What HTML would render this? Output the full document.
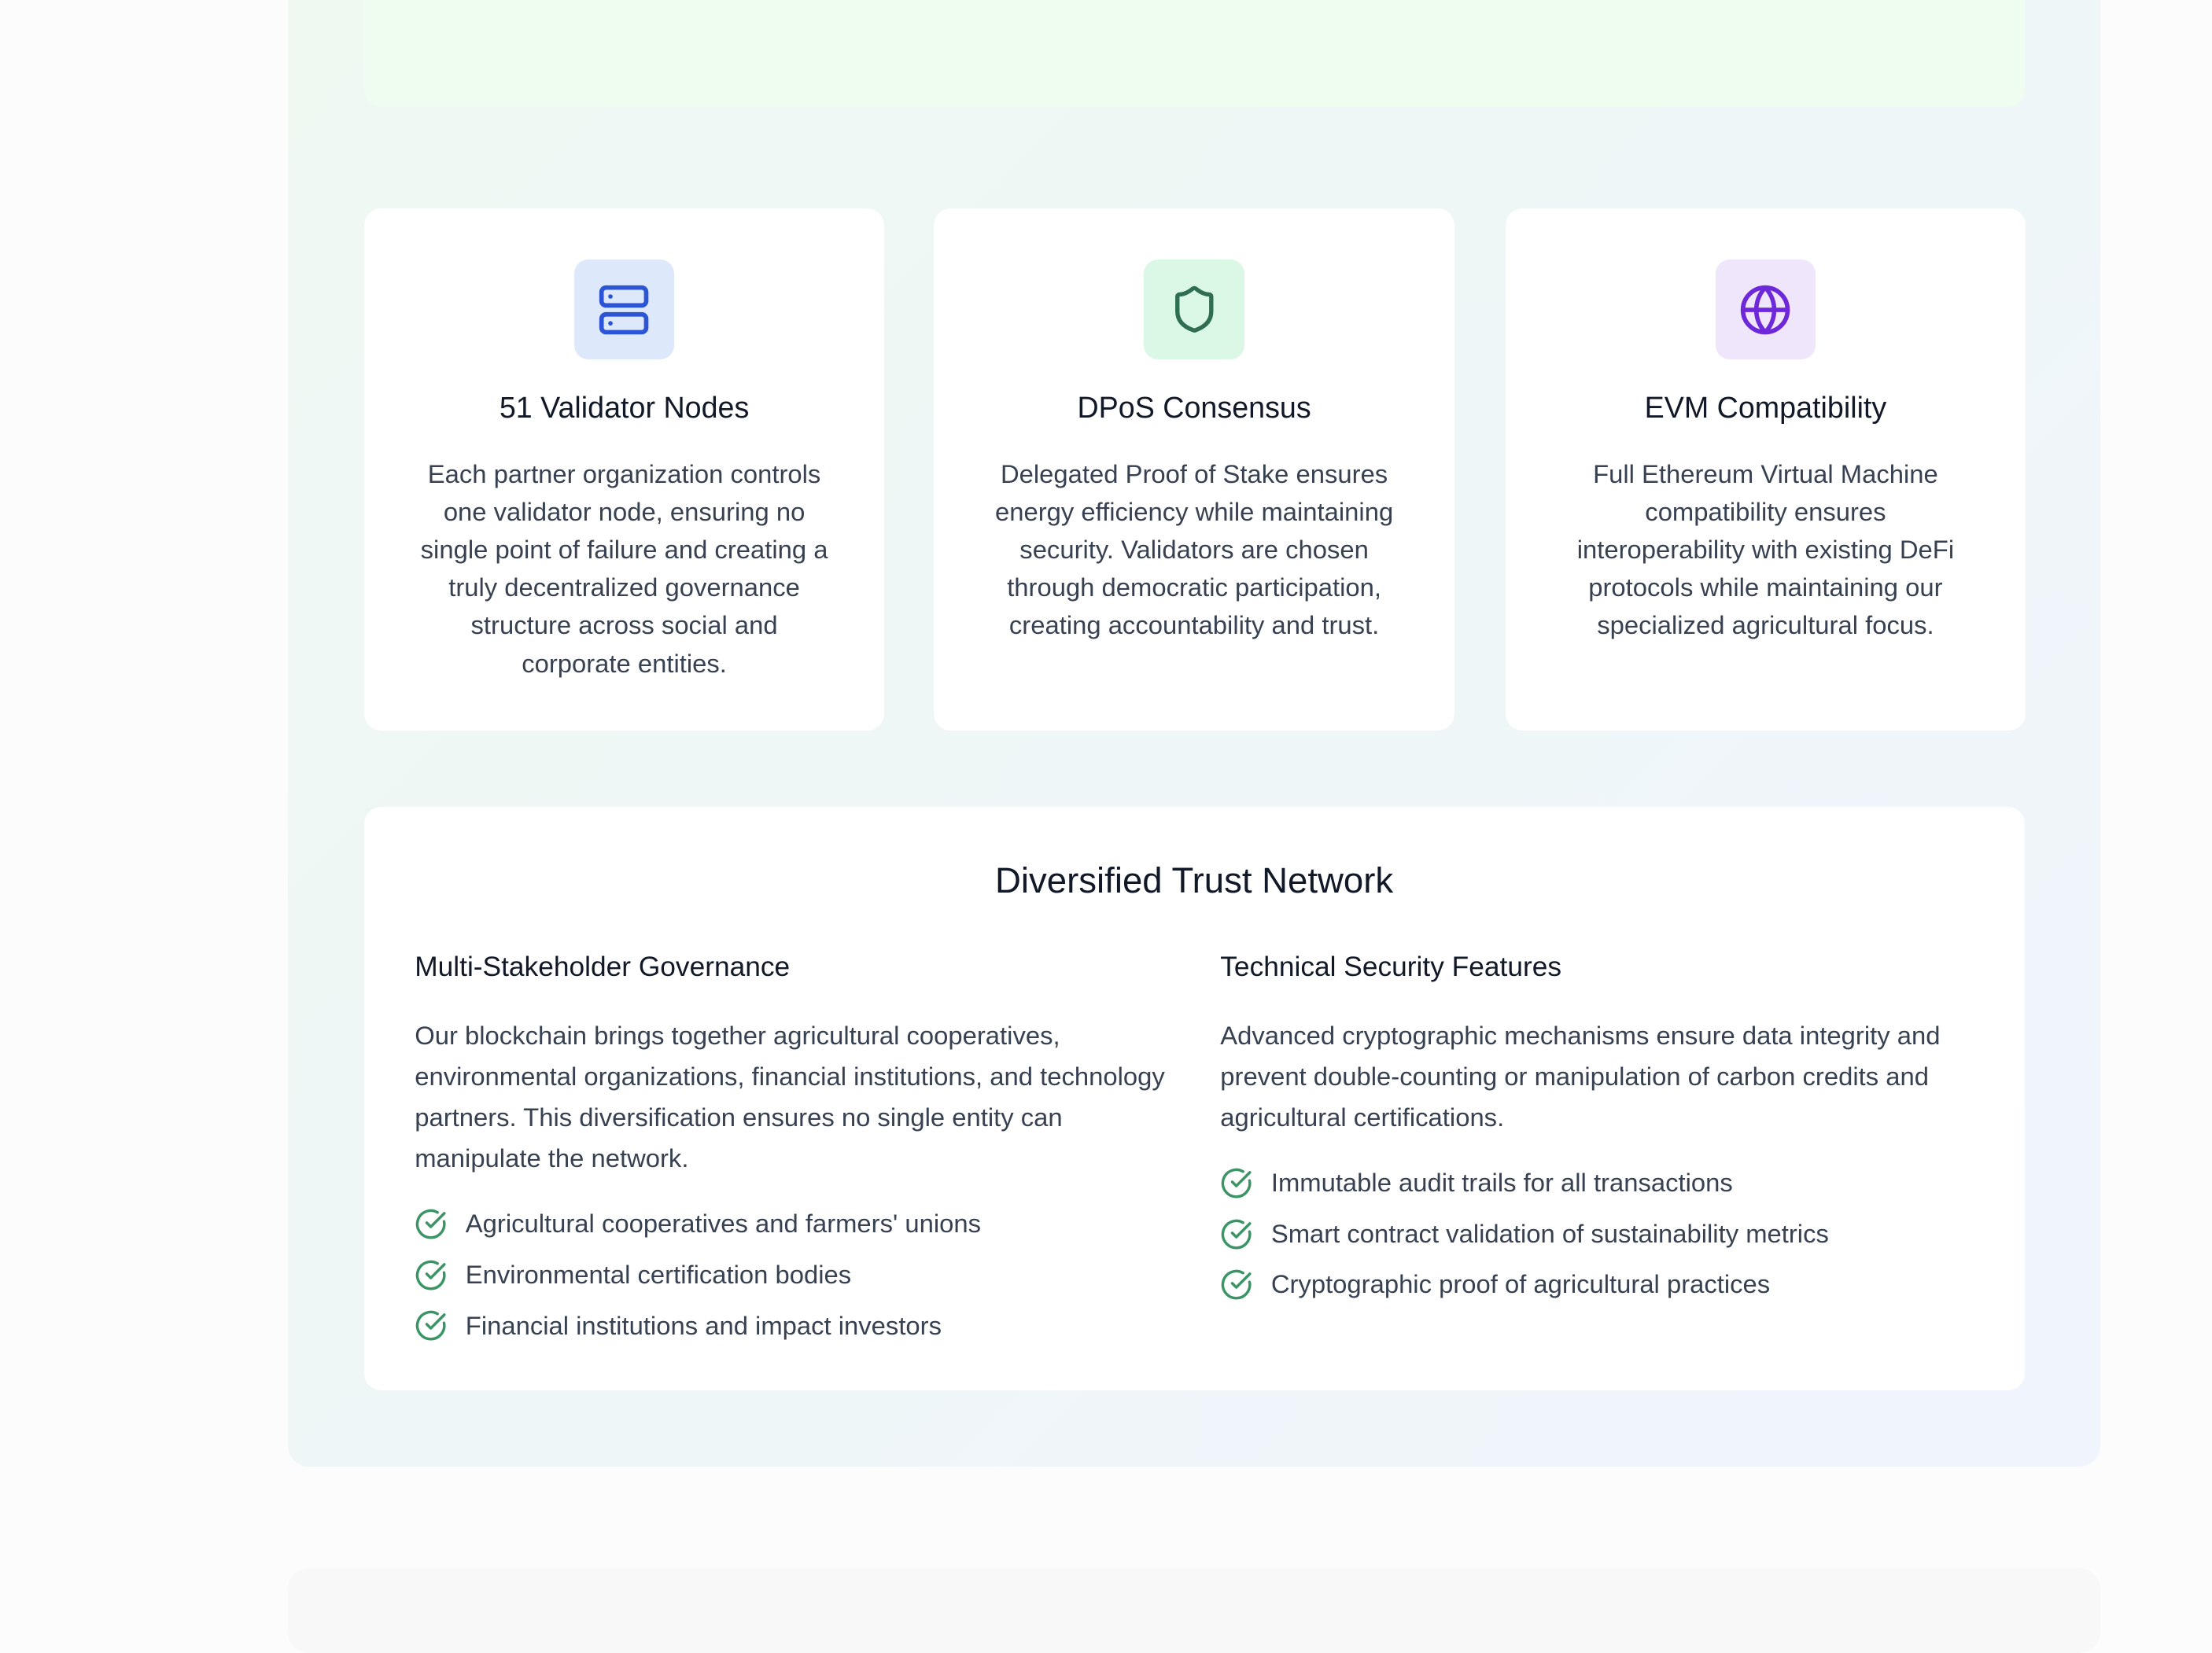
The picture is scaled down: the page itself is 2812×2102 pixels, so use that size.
<!DOCTYPE html>
<html><head><meta charset="utf-8"><style>
html,body{margin:0;padding:0;}
body{width:1568px;height:1132px;zoom:1.7934;background:#fcfcfc;position:relative;overflow:hidden;font-family:"Liberation Sans",sans-serif;color:#374151;}
.panel{position:absolute;left:204px;top:-30px;width:1285px;height:1070px;border-radius:15px;background:linear-gradient(135deg,#eff9f2 0%,#eff6f7 50%,#f0f4fd 100%);}
.top{position:absolute;left:258px;top:-20px;width:1177px;height:96px;border-radius:12px;background:#effcf0;}
.card{position:absolute;top:148px;width:369px;height:370px;background:#fff;border-radius:12px;text-align:center;}
.ib{width:71px;height:71px;border-radius:10px;margin:36px auto 0;display:flex;align-items:center;justify-content:center;}
.card h3{font-size:21px;font-weight:500;color:#111827;margin:20px 0 0;line-height:28px;}
.card p{font-size:18.3px;line-height:26.8px;margin:20px 38px 0;color:#374151;}
.big{position:absolute;left:258px;top:572px;width:1177px;height:414px;background:#fff;border-radius:12px;}
h2{font-size:25.4px;font-weight:500;color:#111827;text-align:center;margin:0;position:absolute;top:38px;left:0;right:0;}
.col{position:absolute;top:100px;width:540px;}
.col h4{font-size:19.7px;font-weight:500;color:#111827;margin:0;line-height:28px;}
.col p{font-size:18.3px;line-height:29px;margin:20px 0 0;}
.col ul{list-style:none;padding:0;margin:14px 0 0;}
.col li{font-size:18.3px;line-height:36px;display:flex;align-items:center;}
.col li svg{margin-right:13px;flex:none;}
.bot{position:absolute;left:204px;top:1112px;width:1285px;height:60px;border-radius:15px;background:#f8f8f8;}
</style></head><body>
<div class="panel"></div>
<div class="top"></div>
<div class="card" style="left:258px"><div class="ib" style="background:#dde8fb"><svg width="38" height="38" viewBox="0 0 24 24" fill="none" stroke="#2b54d6" stroke-width="2" stroke-linecap="round" stroke-linejoin="round"><rect x="2" y="2" width="20" height="8" rx="2"/><rect x="2" y="14" width="20" height="8" rx="2"/><line x1="6" y1="6" x2="6.01" y2="6"/><line x1="6" y1="18" x2="6.01" y2="18"/></svg></div><h3>51 Validator Nodes</h3><p>Each partner organization controls one validator node, ensuring no single point of failure and creating a truly decentralized governance structure across social and corporate entities.</p></div>
<div class="card" style="left:662px"><div class="ib" style="background:#dbf7e5"><svg width="36" height="36" viewBox="0 0 24 24" fill="none" stroke="#2f6f4f" stroke-width="2" stroke-linecap="round" stroke-linejoin="round"><path d="M20 13c0 5-3.5 7.5-7.66 8.95a1 1 0 0 1-.67-.01C7.5 20.5 4 18 4 13V6a1 1 0 0 1 1-1c2 0 4.5-1.2 6.240-2.72a1.17 1.17 0 0 1 1.52 0C14.51 3.81 17 5 19 5a1 1 0 0 1 1 1z"/></svg></div><h3>DPoS Consensus</h3><p>Delegated Proof of Stake ensures energy efficiency while maintaining security. Validators are chosen through democratic participation, creating accountability and trust.</p></div>
<div class="card" style="left:1067px"><div class="ib" style="background:#efe6fc"><svg width="38" height="38" viewBox="0 0 24 24" fill="none" stroke="#6d28d9" stroke-width="2" stroke-linecap="round" stroke-linejoin="round"><circle cx="12" cy="12" r="10"/><path d="M12 2a14.5 14.5 0 0 0 0 20 14.5 14.5 0 0 0 0-20"/><path d="M2 12h20"/></svg></div><h3>EVM Compatibility</h3><p>Full Ethereum Virtual Machine compatibility ensures interoperability with existing DeFi protocols while maintaining our specialized agricultural focus.</p></div>
<div class="big">
<h2>Diversified Trust Network</h2>
<div class="col" style="left:36px"><h4>Multi-Stakeholder Governance</h4><p>Our blockchain brings together agricultural cooperatives, environmental organizations, financial institutions, and technology partners. This diversification ensures no single entity can manipulate the network.</p>
<ul>
<li><svg width="23" height="23" viewBox="0 0 24 24" fill="none" stroke="#3a9463" stroke-width="2" stroke-linecap="round" stroke-linejoin="round"><path d="M21.8 10A10 10 0 1 1 17 3.34"/><path d="m9 11 3 3L22 4"/></svg>Agricultural cooperatives and farmers' unions</li>
<li><svg width="23" height="23" viewBox="0 0 24 24" fill="none" stroke="#3a9463" stroke-width="2" stroke-linecap="round" stroke-linejoin="round"><path d="M21.8 10A10 10 0 1 1 17 3.34"/><path d="m9 11 3 3L22 4"/></svg>Environmental certification bodies</li>
<li><svg width="23" height="23" viewBox="0 0 24 24" fill="none" stroke="#3a9463" stroke-width="2" stroke-linecap="round" stroke-linejoin="round"><path d="M21.8 10A10 10 0 1 1 17 3.34"/><path d="m9 11 3 3L22 4"/></svg>Financial institutions and impact investors</li>
</ul></div>
<div class="col" style="left:607px"><h4>Technical Security Features</h4><p>Advanced cryptographic mechanisms ensure data integrity and prevent double-counting or manipulation of carbon credits and agricultural certifications.</p>
<ul>
<li><svg width="23" height="23" viewBox="0 0 24 24" fill="none" stroke="#3a9463" stroke-width="2" stroke-linecap="round" stroke-linejoin="round"><path d="M21.8 10A10 10 0 1 1 17 3.34"/><path d="m9 11 3 3L22 4"/></svg>Immutable audit trails for all transactions</li>
<li><svg width="23" height="23" viewBox="0 0 24 24" fill="none" stroke="#3a9463" stroke-width="2" stroke-linecap="round" stroke-linejoin="round"><path d="M21.8 10A10 10 0 1 1 17 3.34"/><path d="m9 11 3 3L22 4"/></svg>Smart contract validation of sustainability metrics</li>
<li><svg width="23" height="23" viewBox="0 0 24 24" fill="none" stroke="#3a9463" stroke-width="2" stroke-linecap="round" stroke-linejoin="round"><path d="M21.8 10A10 10 0 1 1 17 3.34"/><path d="m9 11 3 3L22 4"/></svg>Cryptographic proof of agricultural practices</li>
</ul></div>
</div>
<div class="bot"></div>
</body></html>
